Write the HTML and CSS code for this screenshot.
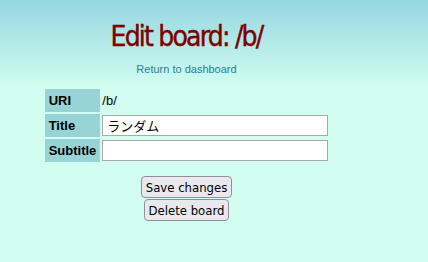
FILE: index.html
```html
<!DOCTYPE html>
<html lang="en">
<head>
  <meta charset="UTF-8">
  <title>Edit board: /b/</title>
  <link rel="stylesheet" href="styles.css">
</head>
<body>
  <div class="page">
    <header class="header">
      <h1>Edit board: /b/</h1>
      <div class="subtitle"><a href="#">Return to dashboard</a></div>
    </header>

    <form class="board-form">
      <table class="board-table">
        <tr>
          <th>URI</th>
          <td>/b/</td>
        </tr>
        <tr>
          <th>Title</th>
          <td><input type="text" name="title" value="ランダム"></td>
        </tr>
        <tr>
          <th>Subtitle</th>
          <td><input type="text" name="subtitle" value=""></td>
        </tr>
      </table>

      <div class="actions">
        <button type="submit" name="save">Save changes</button>
        <button type="submit" name="delete">Delete board</button>
      </div>
    </form>
  </div>
</body>
</html>
```

FILE: styles.css
```css
body {
  margin: 0;
  min-height: 100vh;
  background: linear-gradient(#96d6e0, #d1fef0 88px) no-repeat, #d1fef0;
  font-family: "Liberation Sans", Arial, sans-serif;
  font-size: 13px;
  color: #000;
}

.page {
  width: 373px;
}

/* Header */
.header {
  text-align: center;
  padding-top: 20px;
}

.header h1 {
  margin: 0;
  font-family: "DejaVu Sans Condensed", "DejaVu Sans", sans-serif;
  font-stretch: condensed;
  font-weight: normal;
  font-size: 28px;
  letter-spacing: -1.8px;
  color: #800000;
  line-height: 34px;
  -webkit-text-stroke: 0.4px #800000;
}

.subtitle {
  margin-top: 9px;
  font-size: 11px;
}

.subtitle a {
  color: #2a7d99;
  text-decoration: none;
}

/* Board table */
.board-form {
  margin-top: 12px;
}

.board-table {
  margin: 0 auto;
  border-spacing: 2px;
}

.board-table th {
  background-color: #98d3d6;
  text-align: left;
  padding: 1px 4px;
  height: 21px;
  width: 47px;
}

.board-table td {
  padding: 1px 0;
}

.board-table input {
  width: 226px;
  height: 21px;
  box-sizing: border-box;
  border: 1px solid #a9a9a9;
  padding: 1px 4px;
  font-size: 13px;
  font-family: "Noto Sans CJK JP", "DejaVu Sans", sans-serif;
  background: #fff;
  display: block;
}

.actions {
  margin-top: 12px;
  display: flex;
  flex-direction: column;
  align-items: center;
  gap: 1px;
}

.actions button {
  font-family: "DejaVu Sans Condensed", "DejaVu Sans", sans-serif;
  font-stretch: condensed;
  font-size: 13px;
  background-color: #e9e9ed;
  border: 1px solid #8f8f9d;
  border-radius: 4px;
  padding: 2px 4px;
  color: #000;
  height: 22px;
}
```
